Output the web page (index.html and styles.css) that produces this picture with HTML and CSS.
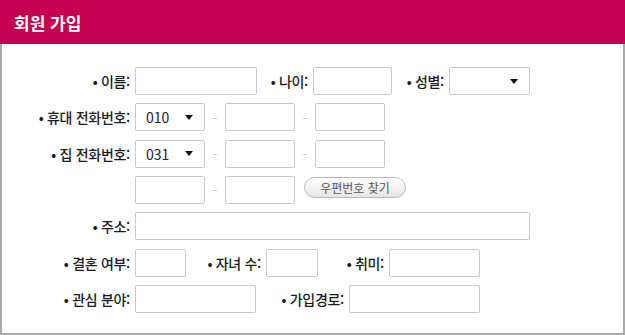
FILE: index.html
```html
<!DOCTYPE html>
<html lang="ko">
<head>
<meta charset="utf-8">
<title>회원 가입</title>
<link rel="stylesheet" href="styles.css">
</head>
<body>
<div class="head"><h1 class="title">회원 가입</h1></div>
<form class="panel">
  <div class="row">
    <label class="lbl lbl-main">• 이름:</label>
    <span class="box w122"></span>
    <label class="lbl w51">• 나이:</label>
    <span class="box w79"></span>
    <label class="lbl w53">• 성별:</label>
    <span class="box sel w81"><span class="val"></span><span class="arrow"></span></span>
  </div>
  <div class="row">
    <label class="lbl lbl-main">• 휴대 전화번호:</label>
    <span class="box sel w70"><span class="val">010</span><span class="arrow"></span></span>
    <span class="dash">-</span>
    <span class="box w70"></span>
    <span class="dash">-</span>
    <span class="box w70"></span>
  </div>
  <div class="row">
    <label class="lbl lbl-main">• 집 전화번호:</label>
    <span class="box sel w70"><span class="val">031</span><span class="arrow"></span></span>
    <span class="dash">-</span>
    <span class="box w70"></span>
    <span class="dash">-</span>
    <span class="box w70"></span>
  </div>
  <div class="row">
    <span class="lbl lbl-main"></span>
    <span class="box w70"></span>
    <span class="dash">-</span>
    <span class="box w70"></span>
    <button type="button" class="zip">우편번호 찾기</button>
  </div>
  <div class="row">
    <label class="lbl lbl-main">• 주소:</label>
    <span class="box w395"></span>
  </div>
  <div class="row">
    <label class="lbl lbl-main">• 결혼 여부:</label>
    <span class="box w51b"></span>
    <label class="lbl w76">• 자녀 수:</label>
    <span class="box w52"></span>
    <label class="lbl w67">• 취미:</label>
    <span class="box w91"></span>
  </div>
  <div class="row">
    <label class="lbl lbl-main">• 관심 분야:</label>
    <span class="box w121"></span>
    <label class="lbl w89">• 가입경로:</label>
    <span class="box w131"></span>
  </div>
</form>
</body>
</html>
```
FILE: styles.css
```css
* { box-sizing: border-box; }
html, body { margin: 0; padding: 0; background: #fff; }
body {
  width: 625px;
  font-family: "Noto Sans CJK KR", "Noto Sans", sans-serif;
  color: #222;
}
.head {
  height: 44px;
  background: #c60050;
  display: flex;
  align-items: center;
  padding-left: 14px;
}
.title {
  margin: 0;
  color: #fff;
  font-size: 17px;
  font-weight: 700;
  line-height: 1;
}
.panel {
  height: 291px;
  border: 2px solid #ababab;
  border-top: 0;
  padding-top: 23px;
  display: flex;
  flex-direction: column;
  gap: 8.33px;
}
.row {
  display: flex;
  align-items: center;
  height: 28px;
}
.lbl {
  flex: none;
  text-align: right;
  padding-right: 5px;
  font-size: 14px;
  font-weight: 500;
  color: #1a1a1a;
  white-space: nowrap;
  letter-spacing: -0.3px;
}
.lbl-main { width: 133px; }
.w51 { width: 56px; }
.w53 { width: 57px; }
.w76 { width: 80px; }
.w67 { width: 71px; }
.w89 { width: 93px; }
.box {
  flex: none;
  height: 28px;
  border: 1px solid #c9c9c9;
  border-radius: 2px;
  background: #fff;
}
.w122 { width: 122px; }
.w79 { width: 79px; }
.w81 { width: 81px; }
.w70 { width: 70px; }
.w395 { width: 395px; }
.w51b { width: 51px; }
.w52 { width: 52px; }
.w91 { width: 91px; }
.w121 { width: 121px; }
.w131 { width: 131px; }
.sel {
  display: flex;
  align-items: center;
  justify-content: space-between;
  padding: 0 11px 0 10px;
}
.val {
  font-size: 14px;
  font-weight: 400;
  color: #222;
}
.arrow {
  width: 0;
  height: 0;
  border-left: 4px solid transparent;
  border-right: 4px solid transparent;
  border-top: 5px solid #111;
}
.dash {
  flex: none;
  width: 20px;
  text-align: center;
  color: #c0c0c0;
  font-size: 13px;
}
.zip {
  margin-left: 9px;
  height: 21px;
  width: 102px;
  border: 1px solid #b9b9b9;
  border-radius: 11px;
  background: linear-gradient(#ffffff, #e6e6e6);
  color: #555;
  font-family: "Noto Sans CJK KR", sans-serif;
  font-size: 12px;
  padding: 0;
  line-height: 19px;
  margin-top: -4px;
}
```
